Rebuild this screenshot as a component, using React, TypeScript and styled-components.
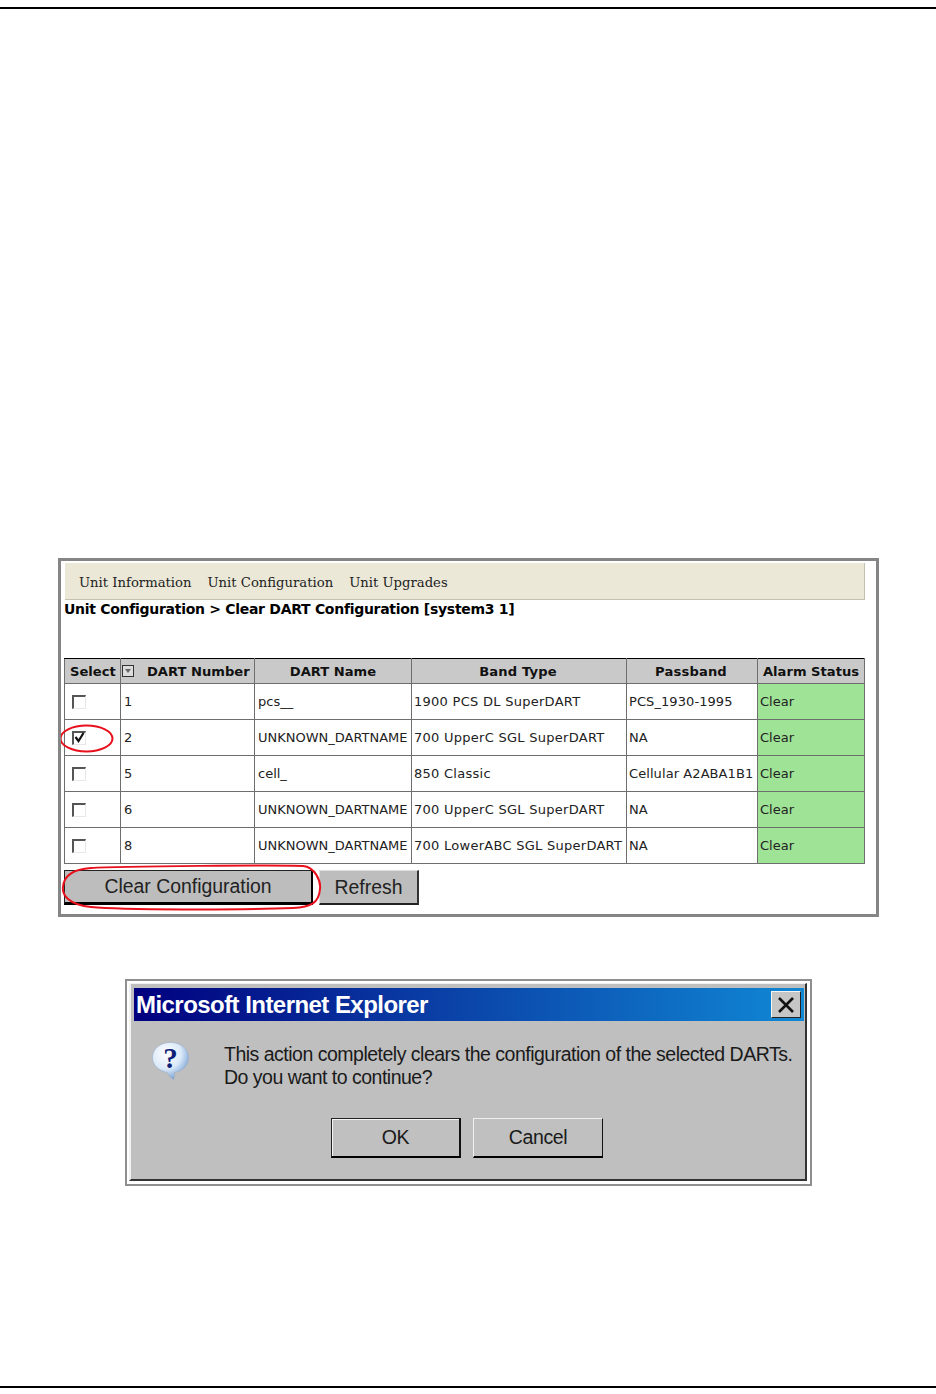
import React from 'react';
import styled, { createGlobalStyle } from 'styled-components';

const GlobalStyle = createGlobalStyle`
  html, body { margin: 0; padding: 0; background: #fff; }
  body { font-family: "DejaVu Sans", Verdana, sans-serif; }
`;

const Page = styled.div`
  width: 936px;
  height: 1394px;
  box-sizing: border-box;
  padding-top: 7px;
  display: flex;
  flex-direction: column;
  overflow: hidden;
`;

const Rule = styled.div<{ $gap: number }>`
  height: 2px;
  background: #000;
  margin-top: ${(p) => p.$gap}px;
`;

const Panel = styled.div`
  position: relative;
  box-sizing: border-box;
  width: 821px;
  height: 359px;
  margin: 549px 0 0 58px;
  border: 3px solid #858585;
  padding: 2px 11px 0 3px;
  background: #fff;
`;

const NavBar = styled.nav`
  box-sizing: border-box;
  height: 37px;
  margin-left: 1px;
  display: flex;
  align-items: center;
  gap: 16px;
  padding: 2px 0 0 14px;
  background: #ebe8d8;
  border-right: 1px solid #c4c1ae;
  border-bottom: 1px solid #c4c1ae;
  font-family: "DejaVu Serif", serif;
  font-size: 13.2px;
  color: #222;
`;

const Title = styled.h1`
  margin: 0;
  height: 58px;
  box-sizing: border-box;
  font-size: 14px;
  line-height: 18px;
  font-weight: bold;
  color: #000;
  letter-spacing: -0.29px;
`;

const Table = styled.table`
  width: 800px;
  table-layout: fixed;
  border-collapse: collapse;
  border: 1px solid #000;
  font-size: 13px;
  color: #222;
`;

const HeadCell = styled.th<{ $w: number; $wide?: boolean }>`
  width: ${(p) => p.$w}px;
  height: 25px;
  padding: 0 ${(p) => (p.$wide ? 2 : 0)}px 0 0;
  box-sizing: border-box;
  background: #c9c9c9;
  border: 1px solid #444;
  border-color: #000 #6e6e6e #6e6e6e #6e6e6e;
  font-size: 13.1px;
  font-weight: bold;
  letter-spacing: ${(p) => (p.$wide ? 0.15 : 0)}px;
  white-space: nowrap;
  color: #111;
`;

const SelectHead = styled(HeadCell)`
  text-align: left;
  padding-left: 5px;
`;

const NumberHead = styled(HeadCell)`
  text-align: left;
`;

const HeadInner = styled.div`
  display: flex;
  align-items: center;
  gap: 13px;
  padding-left: 1px;
`;

const SortBox = styled.span`
  width: 12px;
  height: 12px;
  box-sizing: border-box;
  border: 1px solid #333;
  background: #dcdcdc;
  display: flex;
  align-items: center;
  justify-content: center;
`;

const Cell = styled.td<{ $alarm?: boolean }>`
  height: 36px;
  padding: 0 0 0 3px;
  box-sizing: border-box;
  border: 1px solid #6e6e6e;
  background: ${(p) => (p.$alarm ? '#9fe397' : '#fff')};
  white-space: nowrap;
  overflow: hidden;
`;

const CheckCell = styled(Cell)`
  padding-left: 7px;
`;

const TightCell = styled(Cell)`
  padding-left: 2px;
`;

const BandCell = styled(TightCell)`
  letter-spacing: 0.27px;
`;

const PassCell = styled(TightCell)`
  letter-spacing: 0.08px;
`;

const Check = styled.span`
  display: block;
  width: 14px;
  height: 14px;
  box-sizing: border-box;
  border-style: solid;
  border-width: 2px 1px 1px 2px;
  border-color: #555 #e8e8e8 #e8e8e8 #555;
  background: #fff;
  position: relative;
`;

const Tick = styled.svg`
  position: absolute;
  left: 0;
  top: -1px;
`;

const Actions = styled.div`
  display: flex;
  margin: 6px 0 0;
  gap: 6px;
`;

const PageButton = styled.button<{ $w: number; $primary?: boolean }>`
  width: ${(p) => p.$w}px;
  height: 35px;
  padding: 0;
  background: #bdbdbd;
  border: 1px solid;
  border-color: ${(p) => (p.$primary ? '#222 #000 #000 #222' : '#ddd #333 #222 #ddd')};
  border-bottom-width: ${(p) => (p.$primary ? 3 : 2)}px;
  border-right-width: 2px;
  font-family: "Liberation Sans", Arial, sans-serif;
  font-size: 19.4px;
  color: #222;
`;

const RowMark = styled.svg`
  position: absolute;
  left: 0;
  top: 0;
  pointer-events: none;
`;

const Dialog = styled.section`
  box-sizing: border-box;
  width: 687px;
  height: 207px;
  margin: 62px 0 0 125px;
  border: 2px solid #8f8f8f;
  padding: 2px 3px 3px 2px;
  background: #fff;
`;

const DialogFrame = styled.div`
  box-sizing: border-box;
  height: 100%;
  padding: 4px 1px 0 3px;
  background: #bfbfbf;
  border-right: 2px solid #333;
  border-bottom: 2px solid #333;
  border-left: 2px solid #f2f2f2;
  border-top: 1px solid #f2f2f2;
`;

const TitleBar = styled.header`
  height: 33px;
  display: flex;
  align-items: center;
  justify-content: space-between;
  padding: 0 3px 0 2px;
  background: linear-gradient(90deg, #00007e 0%, #0a3fa6 45%, #1088d4 100%);
  color: #fff;
  font-family: "Liberation Sans", Arial, sans-serif;
  font-size: 24px;
  font-weight: bold;
  letter-spacing: -0.55px;
`;

const CloseButton = styled.span`
  box-sizing: border-box;
  width: 30px;
  height: 27px;
  display: flex;
  align-items: center;
  justify-content: center;
  background: #c6c6c6;
  border: 1px solid;
  border-color: #f5f5f5 #222 #222 #f5f5f5;
`;

const Message = styled.div`
  display: flex;
  gap: 35px;
  padding: 21px 0 0 18px;
`;

const MessageText = styled.p`
  margin: 1px 0 0;
  font-family: "Liberation Sans", Arial, sans-serif;
  font-size: 19.5px;
  line-height: 23px;
  letter-spacing: -0.5px;
  color: #1a1a1a;
  white-space: nowrap;
`;

const DialogActions = styled.div`
  display: flex;
  gap: 12px;
  margin: 29px 0 0 197px;
`;

const DialogButton = styled.button<{ $default?: boolean }>`
  box-sizing: border-box;
  width: 130px;
  height: 40px;
  padding: 0;
  background: #c0c0c0;
  border: 1px solid;
  border-color: ${(p) => (p.$default ? '#222' : '#f0f0f0')};
  border-right-color: #111;
  border-bottom-color: #000;
  border-bottom-width: 2px;
  border-right-width: ${(p) => (p.$default ? 2 : 1)}px;
  box-shadow: ${(p) => (p.$default ? 'inset 1px 1px 0 #f4f4f4' : 'none')};
  font-family: "Liberation Sans", Arial, sans-serif;
  font-size: 19.5px;
  letter-spacing: -0.4px;
  color: #1a1a1a;
`;

const rows = [
  { n: '1', name: 'pcs__', band: '1900 PCS DL SuperDART', pass: 'PCS_1930-1995' },
  { n: '2', name: 'UNKNOWN_DARTNAME', band: '700 UpperC SGL SuperDART', pass: 'NA', checked: true },
  { n: '5', name: 'cell_', band: '850 Classic', pass: 'Cellular A2ABA1B1' },
  { n: '6', name: 'UNKNOWN_DARTNAME', band: '700 UpperC SGL SuperDART', pass: 'NA' },
  { n: '8', name: 'UNKNOWN_DARTNAME', band: '700 LowerABC SGL SuperDART', pass: 'NA' },
];

const QuestionIcon = () => (
  <svg width="37" height="38" viewBox="0 0 37 38">
    <defs>
      <radialGradient id="bubble" cx="0.38" cy="0.3" r="0.75">
        <stop offset="0" stopColor="#ffffff" />
        <stop offset="0.55" stopColor="#dbe9f8" />
        <stop offset="1" stopColor="#6f9bd2" />
      </radialGradient>
    </defs>
    <path
      d="M18.5 0.5C8 0.5 0.5 7 0.5 15.5C0.5 23 6.5 29 15 30.5C17 33 19 36 21.5 37.5C22.5 35 22.5 32.5 22.5 30.5C30.5 29 36.5 23.5 36.5 15.5C36.5 7 29 0.5 18.5 0.5z"
      fill="url(#bubble)"
      stroke="#8ea7c4"
      strokeWidth="0.5"
    />
    <text x="18.5" y="26" textAnchor="middle" fontFamily="Liberation Serif" fontWeight="bold" fontSize="29" fill="#0e1f78">
      ?
    </text>
  </svg>
);

export default function App() {
  return (
    <Page>
      <GlobalStyle />
      <Rule $gap={0} />
      <Panel>
        <NavBar>
          <span>Unit Information</span>
          <span>Unit Configuration</span>
          <span>Unit Upgrades</span>
        </NavBar>
        <Title>Unit Configuration &gt; Clear DART Configuration [system3 1]</Title>
        <Table>
          <thead>
            <tr>
              <SelectHead as="th" $w={56}>Select</SelectHead>
              <NumberHead as="th" $w={134}>
                <HeadInner>
                  <SortBox>
                    <svg width="8" height="6" viewBox="0 0 8 6">
                      <path d="M1 1h6L4 5z" fill="#666" />
                    </svg>
                  </SortBox>
                  DART Number
                </HeadInner>
              </NumberHead>
              <HeadCell $w={157}>DART Name</HeadCell>
              <HeadCell $w={215} $wide>Band Type</HeadCell>
              <HeadCell $w={131} $wide>Passband</HeadCell>
              <HeadCell $w={107}>Alarm Status</HeadCell>
            </tr>
          </thead>
          <tbody>
            {rows.map((r) => (
              <tr key={r.n}>
                <CheckCell>
                  <Check>
                    {r.checked && (
                      <Tick width="11" height="11" viewBox="0 0 11 11">
                        <path d="M1.5 5l3 4 5-8" fill="none" stroke="#111" strokeWidth="2.2" />
                      </Tick>
                    )}
                  </Check>
                </CheckCell>
                <Cell>{r.n}</Cell>
                <Cell>{r.name}</Cell>
                <BandCell>{r.band}</BandCell>
                <PassCell>{r.pass}</PassCell>
                <TightCell $alarm>Clear</TightCell>
              </tr>
            ))}
          </tbody>
        </Table>
        <Actions>
          <PageButton $w={249} $primary>Clear Configuration</PageButton>
          <PageButton $w={100}>Refresh</PageButton>
        </Actions>
        <RowMark width="815" height="353" viewBox="0 0 815 353">
          <ellipse cx="25.5" cy="177.5" rx="26" ry="13" fill="none" stroke="#e8101c" strokeWidth="2" />
          <path
            d="M30 307C60 305 222 304 242 305C254 306 260 320 259 328C258 342 250 346 232 347C180 349 60 349 30 346C8 344 1 334 2 326C3 314 14 308 30 307z"
            fill="none"
            stroke="#e8101c"
            strokeWidth="2"
          />
        </RowMark>
      </Panel>
      <Dialog>
        <DialogFrame>
          <TitleBar>
            Microsoft Internet Explorer
            <CloseButton>
              <svg width="20" height="18" viewBox="0 0 20 18">
                <path d="M3 2l14 14M17 2L3 16" stroke="#111" strokeWidth="2.6" />
              </svg>
            </CloseButton>
          </TitleBar>
          <Message>
            <QuestionIcon />
            <MessageText>
              This action completely clears the configuration of the selected DARTs.
              <br />
              Do you want to continue?
            </MessageText>
          </Message>
          <DialogActions>
            <DialogButton $default>OK</DialogButton>
            <DialogButton>Cancel</DialogButton>
          </DialogActions>
        </DialogFrame>
      </Dialog>
      <Rule $gap={200} />
    </Page>
  );
}
